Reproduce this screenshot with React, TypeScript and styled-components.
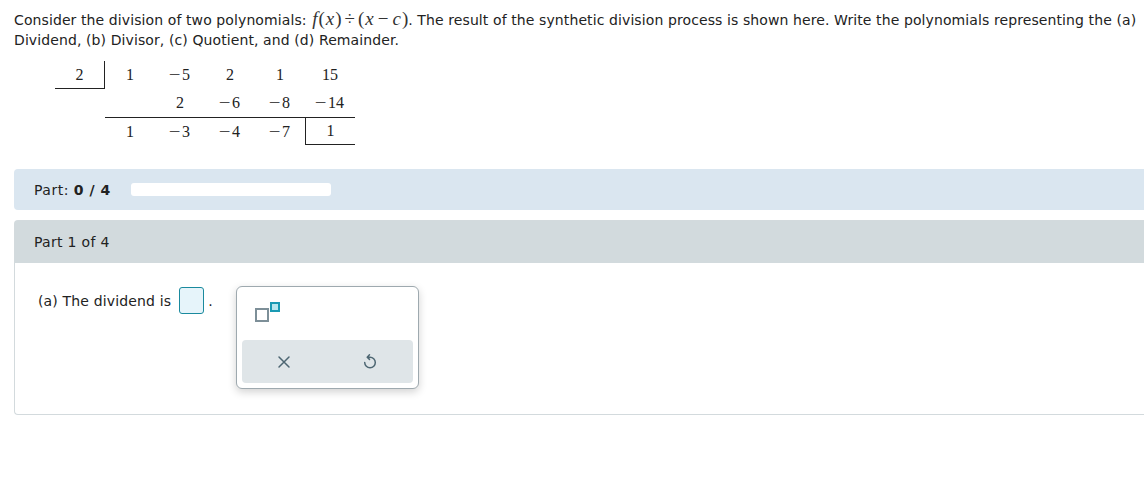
import React from 'react';
import styled, { createGlobalStyle } from 'styled-components';

const GlobalStyle = createGlobalStyle`
  body {
    margin: 0;
    background: #fff;
    font-family: 'DejaVu Sans', Verdana, sans-serif;
    color: #222;
    overflow: hidden;
  }
`;

const Page = styled.div`
  padding: 9px 0 0 14px;
`;

const Prompt = styled.p`
  margin: 0;
  font-size: 14px;
  letter-spacing: 0.1px;
  line-height: 20px;
  white-space: nowrap;
`;

const MathText = styled.span`
  font-family: 'Liberation Serif', 'Times New Roman', serif;
  font-size: 19px;
  letter-spacing: 0;
  color: #333;
  white-space: nowrap;
`;

const Italic = styled.i`
  font-style: italic;
  padding: 0 1px;
`;

const Op = styled.span`
  padding: 0 3px;
`;

const Division = styled.div`
  display: grid;
  grid-template-columns: repeat(6, 50px);
  grid-auto-rows: 28px;
  margin: 11px 0 0 41px;
  width: 300px;
  font-family: 'Liberation Serif', 'Times New Roman', serif;
  font-size: 16px;
  color: #222;
`;

const Cell = styled.div<{ $right?: boolean; $bottom?: boolean; $top?: boolean; $left?: boolean }>`
  display: flex;
  align-items: center;
  justify-content: center;
  border-right: ${(p) => (p.$right ? '1px solid #222' : 'none')};
  border-bottom: ${(p) => (p.$bottom ? '1px solid #222' : 'none')};
  border-top: ${(p) => (p.$top ? '1px solid #222' : 'none')};
  border-left: ${(p) => (p.$left ? '1px solid #222' : 'none')};
  white-space: pre;
`;

const Minus = styled.span`
  margin-right: 3px;
  transform: scaleX(1.3);
  display: inline-block;
`;

const ProgressPanel = styled.div`
  margin-top: 24px;
  height: 41px;
  background: #dae6f0;
  border-radius: 4px 0 0 4px;
  display: flex;
  align-items: center;
  padding-left: 20px;
  font-size: 14px;
  letter-spacing: 0.5px;
  gap: 20px;
`;

const Bold = styled.b`
  font-weight: bold;
`;

const ProgressTrack = styled.div`
  width: 200px;
  height: 13px;
  background: #fff;
  border-radius: 3px;
`;

const PartCard = styled.div`
  margin-top: 10px;
  border: 1px solid #d3dadd;
  border-right: none;
  border-radius: 4px 0 0 4px;
  height: 193px;
`;

const PartHeader = styled.div`
  height: 42px;
  background: #d2dadd;
  display: flex;
  align-items: center;
  padding-left: 19px;
  font-size: 14px;
  letter-spacing: 0.3px;
`;

const PartBody = styled.div`
  display: flex;
  align-items: flex-start;
  padding: 24px 0 0 23px;
`;

const Question = styled.div`
  display: flex;
  align-items: center;
  font-size: 14px;
  letter-spacing: 0.15px;
  height: 27px;
`;

const AnswerBox = styled.div`
  width: 23px;
  height: 25px;
  margin: 0 4px 0 8px;
  border: 1px solid #1a8a9e;
  border-radius: 3px;
  background: #e6f4fa;
`;

const Palette = styled.div`
  margin-left: 23px;
  margin-top: -1px;
  width: 171px;
  height: 96px;
  border: 1px solid #9ea9af;
  border-radius: 6px;
  box-shadow: 0 3px 8px rgba(0, 0, 0, 0.18);
  background: #fff;
  display: flex;
  flex-direction: column;
  padding: 0 5px 5px;
`;

const PaletteKeys = styled.div`
  flex: 1;
  display: flex;
  align-items: flex-start;
  padding: 14px 0 0 12px;
`;

const ActionBar = styled.div`
  height: 43px;
  background: #dfe5e8;
  border-radius: 4px;
  display: flex;
  align-items: center;
  justify-content: center;
  gap: 62px;
`;

const IconButton = styled.button`
  border: none;
  background: transparent;
  padding: 0;
  width: 24px;
  height: 24px;
  display: flex;
  align-items: center;
  justify-content: center;
  cursor: pointer;
`;

const ExponentIcon = () => (
  <svg width="26" height="22" viewBox="0 0 26 22">
    <rect x="2" y="8" width="12" height="12" fill="#fff" stroke="#7d8f98" strokeWidth="2" />
    <rect x="17" y="2" width="8" height="8" fill="#b8e6ee" stroke="#1a9ab3" strokeWidth="2" />
  </svg>
);

const CloseIcon = () => (
  <svg width="14" height="14" viewBox="0 0 14 14">
    <path d="M2 2 L12 12 M12 2 L2 12" stroke="#4d6672" strokeWidth="1.5" strokeLinecap="round" />
  </svg>
);

const UndoIcon = () => (
  <svg width="18" height="18" viewBox="0 0 18 18">
    <path
      d="M8.5 1.8 L6.2 4.2 L8.5 6.4 M6.5 4.2 H9 A5.3 5.3 0 1 1 3.7 9.6"
      fill="none"
      stroke="#4d6672"
      strokeWidth="1.5"
      strokeLinecap="round"
      strokeLinejoin="round"
    />
  </svg>
);

const rows = [
  ['2', '1', '-5', '2', '1', '15'],
  ['', '', '2', '-6', '-8', '-14'],
  ['', '1', '-3', '-4', '-7', '1'],
];

const renderValue = (value: string) =>
  value.startsWith('-') ? (
    <>
      <Minus>−</Minus>
      {value.slice(1)}
    </>
  ) : (
    value
  );

const App = () => {
  return (
    <Page>
      <GlobalStyle />
      <Prompt>
        Consider the division of two polynomials:{' '}
        <MathText>
          <Italic>f</Italic>(<Italic>x</Italic>)<Op>÷</Op>(<Italic>x</Italic>
          <Op>−</Op>
          <Italic>c</Italic>)
        </MathText>
        . The result of the synthetic division process is shown here. Write the polynomials representing the (a)
        <br />
        Dividend, (b) Divisor, (c) Quotient, and (d) Remainder.
      </Prompt>

      <Division>
        {rows.map((row, r) =>
          row.map((value, c) => (
            <Cell
              key={`${r}-${c}`}
              $right={r === 0 && c === 0}
              $bottom={(r === 0 && c === 0) || (r === 2 && c === 5)}
              $top={r === 2 && c > 0}
              $left={r === 2 && c === 5}
            >
              {renderValue(value)}
            </Cell>
          ))
        )}
      </Division>

      <ProgressPanel>
        <span>
          Part: <Bold>0 / 4</Bold>
        </span>
        <ProgressTrack />
      </ProgressPanel>

      <PartCard>
        <PartHeader>Part 1 of 4</PartHeader>
        <PartBody>
          <Question>
            (a) The dividend is
            <AnswerBox />.
          </Question>
          <Palette>
            <PaletteKeys>
              <ExponentIcon />
            </PaletteKeys>
            <ActionBar>
              <IconButton aria-label="clear">
                <CloseIcon />
              </IconButton>
              <IconButton aria-label="undo">
                <UndoIcon />
              </IconButton>
            </ActionBar>
          </Palette>
        </PartBody>
      </PartCard>
    </Page>
  );
};

export default App;
